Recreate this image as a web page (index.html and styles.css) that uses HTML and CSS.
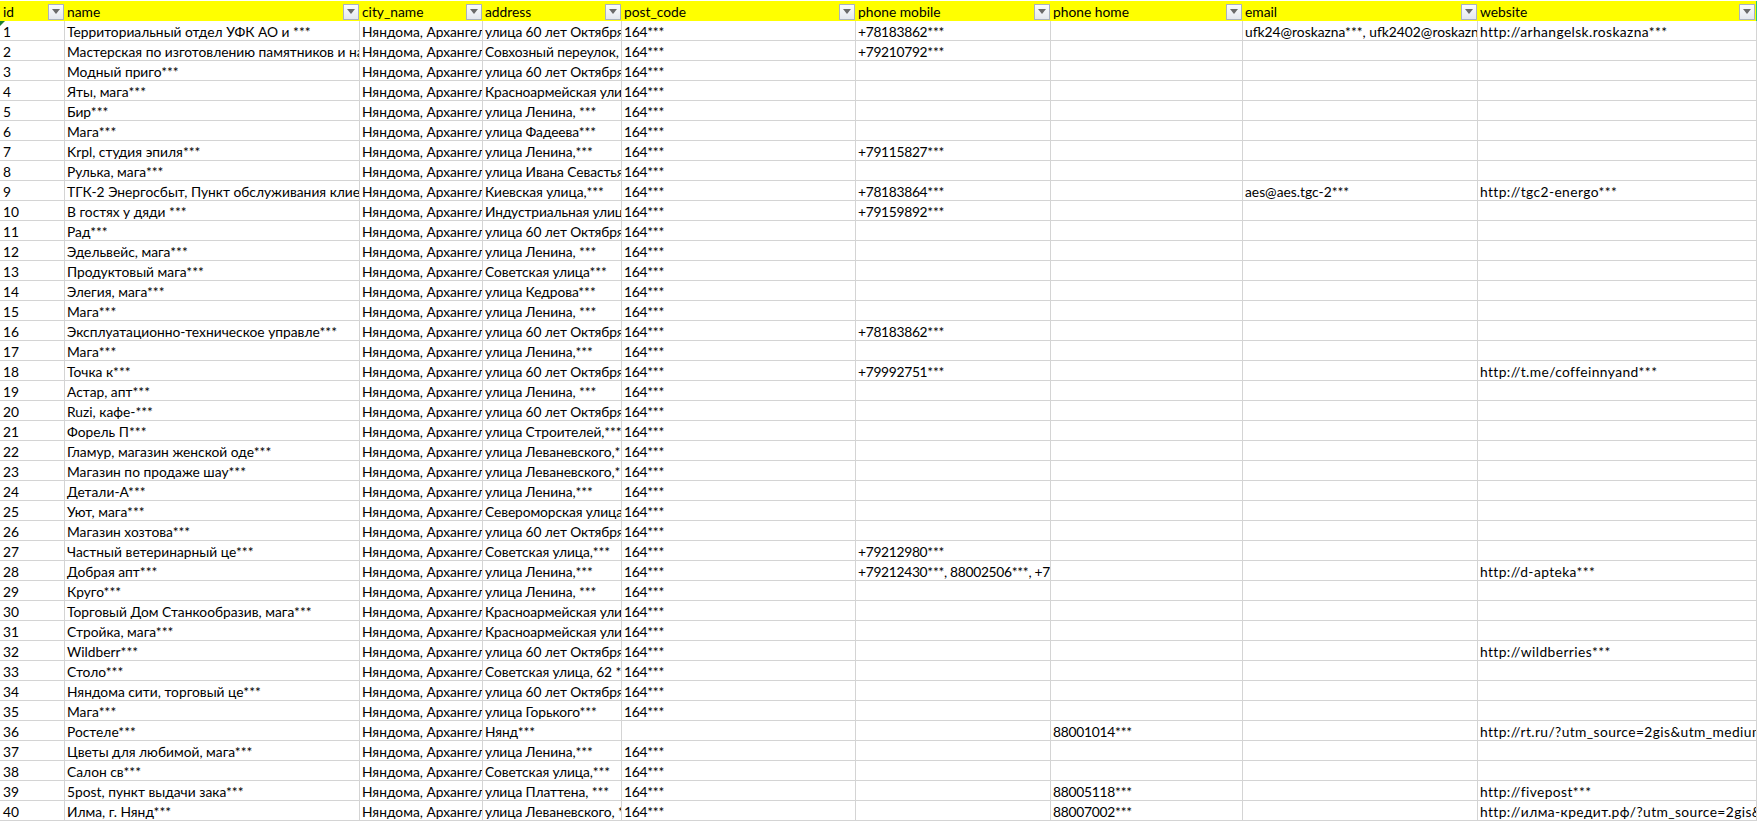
FILE: index.html
```html
<!DOCTYPE html>
<html lang="ru">
<head>
<meta charset="utf-8">
<title>Sheet</title>
<link rel="stylesheet" href="styles.css">
</head>
<body>
<table class="sheet">
<colgroup><col class="c-id"><col class="c-name"><col class="c-city"><col class="c-addr"><col class="c-post"><col class="c-mob"><col class="c-home"><col class="c-mail"><col class="c-web"></colgroup>
<thead><tr>
<th><div class="hd"><span>id</span><i class="fb"><svg viewBox="0 0 8 5" width="8" height="5"><path d="M0 0h8L4 5z"/></svg></i></div></th>
<th><div class="hd"><span>name</span><i class="fb"><svg viewBox="0 0 8 5" width="8" height="5"><path d="M0 0h8L4 5z"/></svg></i></div></th>
<th><div class="hd"><span>city_name</span><i class="fb"><svg viewBox="0 0 8 5" width="8" height="5"><path d="M0 0h8L4 5z"/></svg></i></div></th>
<th><div class="hd"><span>address</span><i class="fb"><svg viewBox="0 0 8 5" width="8" height="5"><path d="M0 0h8L4 5z"/></svg></i></div></th>
<th><div class="hd"><span>post_code</span><i class="fb"><svg viewBox="0 0 8 5" width="8" height="5"><path d="M0 0h8L4 5z"/></svg></i></div></th>
<th><div class="hd"><span>phone mobile</span><i class="fb"><svg viewBox="0 0 8 5" width="8" height="5"><path d="M0 0h8L4 5z"/></svg></i></div></th>
<th><div class="hd"><span>phone home</span><i class="fb"><svg viewBox="0 0 8 5" width="8" height="5"><path d="M0 0h8L4 5z"/></svg></i></div></th>
<th><div class="hd"><span>email</span><i class="fb"><svg viewBox="0 0 8 5" width="8" height="5"><path d="M0 0h8L4 5z"/></svg></i></div></th>
<th class="last"><div class="hd"><span>website</span><i class="fb"><svg viewBox="0 0 8 5" width="8" height="5"><path d="M0 0h8L4 5z"/></svg></i></div></th>
</tr></thead>
<tbody>
<tr><td class="first">1</td><td>Территориальный отдел УФК АО и ***</td><td>Няндома, Архангельская обл***</td><td>улица 60 лет Октября, ***</td><td>164***</td><td>+78183862***</td><td></td><td>ufk24@roskazna***, ufk2402@roskazna***</td><td>http://arhangelsk.roskazna***</td></tr>
<tr><td>2</td><td>Мастерская по изготовлению памятников и надгробий***</td><td>Няндома, Архангельская обл***</td><td>Совхозный переулок, ***</td><td>164***</td><td>+79210792***</td><td></td><td></td><td></td></tr>
<tr><td>3</td><td>Модный приго***</td><td>Няндома, Архангельская обл***</td><td>улица 60 лет Октября, ***</td><td>164***</td><td></td><td></td><td></td><td></td></tr>
<tr><td>4</td><td>Яты, мага***</td><td>Няндома, Архангельская обл***</td><td>Красноармейская улица, ***</td><td>164***</td><td></td><td></td><td></td><td></td></tr>
<tr><td>5</td><td>Бир***</td><td>Няндома, Архангельская обл***</td><td>улица Ленина, ***</td><td>164***</td><td></td><td></td><td></td><td></td></tr>
<tr><td>6</td><td>Мага***</td><td>Няндома, Архангельская обл***</td><td>улица Фадеева***</td><td>164***</td><td></td><td></td><td></td><td></td></tr>
<tr><td>7</td><td>Krpl, студия эпиля***</td><td>Няндома, Архангельская обл***</td><td>улица Ленина,***</td><td>164***</td><td>+79115827***</td><td></td><td></td><td></td></tr>
<tr><td>8</td><td>Рулька, мага***</td><td>Няндома, Архангельская обл***</td><td>улица Ивана Севастьянова, ***</td><td>164***</td><td></td><td></td><td></td><td></td></tr>
<tr><td>9</td><td>ТГК-2 Энергосбыт, Пункт обслуживания клиентов***</td><td>Няндома, Архангельская обл***</td><td>Киевская улица,***</td><td>164***</td><td>+78183864***</td><td></td><td>aes@aes.tgc-2***</td><td>http://tgc2-energo***</td></tr>
<tr><td>10</td><td>В гостях у дяди ***</td><td>Няндома, Архангельская обл***</td><td>Индустриальная улица, ***</td><td>164***</td><td>+79159892***</td><td></td><td></td><td></td></tr>
<tr><td>11</td><td>Рад***</td><td>Няндома, Архангельская обл***</td><td>улица 60 лет Октября, ***</td><td>164***</td><td></td><td></td><td></td><td></td></tr>
<tr><td>12</td><td>Эдельвейс, мага***</td><td>Няндома, Архангельская обл***</td><td>улица Ленина, ***</td><td>164***</td><td></td><td></td><td></td><td></td></tr>
<tr><td>13</td><td>Продуктовый мага***</td><td>Няндома, Архангельская обл***</td><td>Советская улица***</td><td>164***</td><td></td><td></td><td></td><td></td></tr>
<tr><td>14</td><td>Элегия, мага***</td><td>Няндома, Архангельская обл***</td><td>улица Кедрова***</td><td>164***</td><td></td><td></td><td></td><td></td></tr>
<tr><td>15</td><td>Мага***</td><td>Няндома, Архангельская обл***</td><td>улица Ленина, ***</td><td>164***</td><td></td><td></td><td></td><td></td></tr>
<tr><td>16</td><td>Эксплуатационно-техническое управле***</td><td>Няндома, Архангельская обл***</td><td>улица 60 лет Октября, ***</td><td>164***</td><td>+78183862***</td><td></td><td></td><td></td></tr>
<tr><td>17</td><td>Мага***</td><td>Няндома, Архангельская обл***</td><td>улица Ленина,***</td><td>164***</td><td></td><td></td><td></td><td></td></tr>
<tr><td>18</td><td>Точка к***</td><td>Няндома, Архангельская обл***</td><td>улица 60 лет Октября, ***</td><td>164***</td><td>+79992751***</td><td></td><td></td><td>http://t.me/coffeinnyand***</td></tr>
<tr><td>19</td><td>Астар, апт***</td><td>Няндома, Архангельская обл***</td><td>улица Ленина, ***</td><td>164***</td><td></td><td></td><td></td><td></td></tr>
<tr><td>20</td><td>Ruzi, кафе-***</td><td>Няндома, Архангельская обл***</td><td>улица 60 лет Октября, ***</td><td>164***</td><td></td><td></td><td></td><td></td></tr>
<tr><td>21</td><td>Форель П***</td><td>Няндома, Архангельская обл***</td><td>улица Строителей,***</td><td>164***</td><td></td><td></td><td></td><td></td></tr>
<tr><td>22</td><td>Гламур, магазин женской оде***</td><td>Няндома, Архангельская обл***</td><td>улица Леваневского,***</td><td>164***</td><td></td><td></td><td></td><td></td></tr>
<tr><td>23</td><td>Магазин по продаже шау***</td><td>Няндома, Архангельская обл***</td><td>улица Леваневского,***</td><td>164***</td><td></td><td></td><td></td><td></td></tr>
<tr><td>24</td><td>Детали-А***</td><td>Няндома, Архангельская обл***</td><td>улица Ленина,***</td><td>164***</td><td></td><td></td><td></td><td></td></tr>
<tr><td>25</td><td>Уют, мага***</td><td>Няндома, Архангельская обл***</td><td>Североморская улица, ***</td><td>164***</td><td></td><td></td><td></td><td></td></tr>
<tr><td>26</td><td>Магазин хозтова***</td><td>Няндома, Архангельская обл***</td><td>улица 60 лет Октября, ***</td><td>164***</td><td></td><td></td><td></td><td></td></tr>
<tr><td>27</td><td>Частный ветеринарный це***</td><td>Няндома, Архангельская обл***</td><td>Советская улица,***</td><td>164***</td><td>+79212980***</td><td></td><td></td><td></td></tr>
<tr><td>28</td><td>Добрая апт***</td><td>Няндома, Архангельская обл***</td><td>улица Ленина,***</td><td>164***</td><td>+79212430***, 88002506***, +78183***</td><td></td><td></td><td>http://d-apteka***</td></tr>
<tr><td>29</td><td>Круго***</td><td>Няндома, Архангельская обл***</td><td>улица Ленина, ***</td><td>164***</td><td></td><td></td><td></td><td></td></tr>
<tr><td>30</td><td>Торговый Дом Станкообразив, мага***</td><td>Няндома, Архангельская обл***</td><td>Красноармейская улица, ***</td><td>164***</td><td></td><td></td><td></td><td></td></tr>
<tr><td>31</td><td>Стройка, мага***</td><td>Няндома, Архангельская обл***</td><td>Красноармейская улица, ***</td><td>164***</td><td></td><td></td><td></td><td></td></tr>
<tr><td>32</td><td>Wildberr***</td><td>Няндома, Архангельская обл***</td><td>улица 60 лет Октября, ***</td><td>164***</td><td></td><td></td><td></td><td>http://wildberries***</td></tr>
<tr><td>33</td><td>Столо***</td><td>Няндома, Архангельская обл***</td><td>Советская улица, 62 ***</td><td>164***</td><td></td><td></td><td></td><td></td></tr>
<tr><td>34</td><td>Няндома сити, торговый це***</td><td>Няндома, Архангельская обл***</td><td>улица 60 лет Октября, ***</td><td>164***</td><td></td><td></td><td></td><td></td></tr>
<tr><td>35</td><td>Мага***</td><td>Няндома, Архангельская обл***</td><td>улица Горького***</td><td>164***</td><td></td><td></td><td></td><td></td></tr>
<tr><td>36</td><td>Ростеле***</td><td>Няндома, Архангельская обл***</td><td>Нянд***</td><td></td><td></td><td>88001014***</td><td></td><td>http://rt.ru/?utm_source=2gis&amp;utm_medium=***</td></tr>
<tr><td>37</td><td>Цветы для любимой, мага***</td><td>Няндома, Архангельская обл***</td><td>улица Ленина,***</td><td>164***</td><td></td><td></td><td></td><td></td></tr>
<tr><td>38</td><td>Салон св***</td><td>Няндома, Архангельская обл***</td><td>Советская улица,***</td><td>164***</td><td></td><td></td><td></td><td></td></tr>
<tr><td>39</td><td>5post, пункт выдачи зака***</td><td>Няндома, Архангельская обл***</td><td>улица Платтена, ***</td><td>164***</td><td></td><td>88005118***</td><td></td><td>http://fivepost***</td></tr>
<tr><td>40</td><td>Илма, г. Нянд***</td><td>Няндома, Архангельская обл***</td><td>улица Леваневского, ***</td><td>164***</td><td></td><td>88007002***</td><td></td><td>http://илма-кредит.рф/?utm_source=2gis&amp;utm***</td></tr>
</tbody>
</table>
</body>
</html>
```

FILE: styles.css
```css
html, body {
  margin: 0;
  padding: 0;
  background: #fff;
  overflow: hidden;
}
body {
  padding-top: 1px;
  font-family: "Lato", "Noto Sans", "Liberation Sans", sans-serif;
  font-size: 13.8px;
  color: #000;
}
.sheet {
  border-collapse: separate;
  border-spacing: 0;
  table-layout: fixed;
  width: 1757px;
}
.c-id { width: 65px; }
.c-name { width: 295px; }
.c-city { width: 123px; }
.c-addr { width: 139px; }
.c-post { width: 234px; }
.c-mob { width: 195px; }
.c-home { width: 192px; }
.c-mail { width: 235px; }
.c-web { width: 279px; }
th {
  height: 20px;
  padding: 0;
  background: #ffff00;
  font-weight: 400;
  text-align: left;
}
th.last { border-right: 1px solid #22c47c; }
.hd {
  display: flex;
  align-items: center;
  justify-content: space-between;
  height: 20px;
  padding: 1px 1px 0 2px;
  box-sizing: border-box;
  overflow: hidden;
}
th:first-child .hd { padding-left: 3px; }
.fb {
  display: flex;
  align-items: center;
  justify-content: center;
  box-sizing: border-box;
  width: 16px;
  height: 16px;
  flex: none;
  background: linear-gradient(#fbfcfd, #e4e8ee);
  border: 1px solid #a9b2c0;
}
.fb svg { display: block; }
.fb path { fill: #6a6a6a; }
td {
  box-sizing: border-box;
  height: 20px;
  padding: 1px 0 0 2px;
  border-right: 1px solid #d4d4d4;
  border-bottom: 1px solid #d4d4d4;
  white-space: nowrap;
  overflow: hidden;
  line-height: 17px;
  vertical-align: middle;
}
td:first-child { padding-left: 3px; }
td:nth-child(4) { letter-spacing: -0.1px; }
td:nth-child(5), td:nth-child(7) { letter-spacing: -0.25px; }
td:nth-child(6) { letter-spacing: -0.3px; }
td:nth-child(9) { letter-spacing: 0.4px; }
td.first {
  position: relative;
}
td.first::before {
  content: "";
  position: absolute;
  left: 0;
  top: 0;
  border-top: 5px solid #1e7d32;
  border-right: 5px solid transparent;
}
```
